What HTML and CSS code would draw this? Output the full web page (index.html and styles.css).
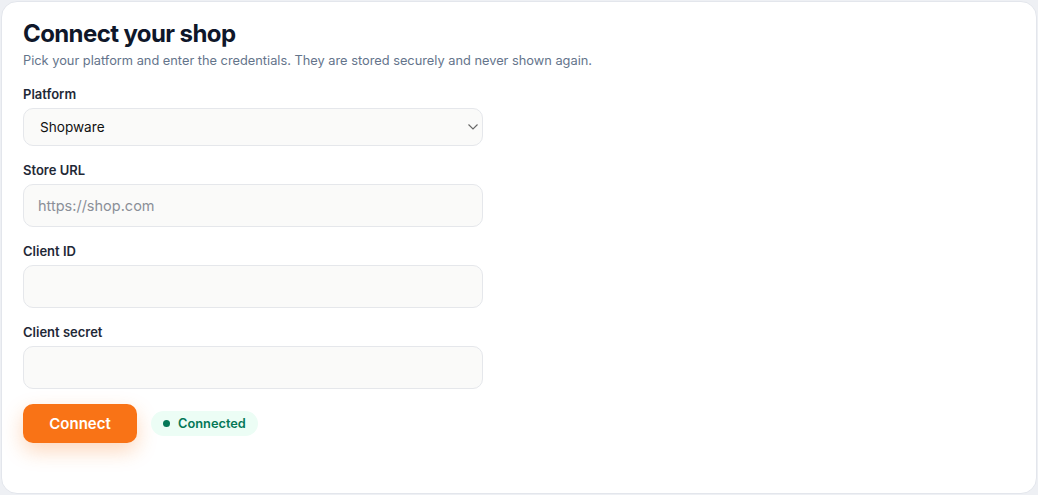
FILE: index.html
```html
<!DOCTYPE html>
<html>
<head>
<meta charset="utf-8">
<link rel="stylesheet" href="styles.css">
</head>
<body>
<div class="card">
  <h1 class="title">Connect your shop</h1>
  <p class="subtitle">Pick your platform and enter the credentials. They are stored securely and never shown again.</p>
  <form class="form">
    <div class="field">
      <label class="label">Platform</label>
      <div class="select">
        <span>Shopware</span>
        <svg class="chev" width="10" height="6" viewBox="0 0 10 6"><path d="M0.5 0.5l4.5 4.5 4.5-4.5" fill="none" stroke="#666" stroke-width="1.1"/></svg>
      </div>
    </div>
    <div class="field">
      <label class="label">Store URL</label>
      <div class="input"><span class="ph">https://shop.com</span></div>
    </div>
    <div class="field">
      <label class="label">Client ID</label>
      <div class="input"></div>
    </div>
    <div class="field field-secret">
      <label class="label">Client secret</label>
      <div class="input"></div>
    </div>
    <div class="actions">
      <button type="button" class="btn">Connect</button>
      <span class="badge"><span class="dot"></span>Connected</span>
    </div>
  </form>
</div>
</body>
</html>
```

FILE: styles.css
```css
html, body {
  margin: 0;
  padding: 0;
  background: #eef0f4;
}
body {
  padding: 1px;
  font-family: Inter, "Noto Sans", sans-serif;
  color: #111827;
}
.card {
  box-sizing: border-box;
  height: 493px;
  background: #fff;
  border: 1px solid #e3e6ec;
  border-radius: 16px;
  padding: 17px 21px;
}
.title {
  margin: 0;
  font-size: 24px;
  font-weight: 700;
  line-height: 30px;
  letter-spacing: -0.6px;
  color: #0f172a;
}
.subtitle {
  margin: 3px 0 0;
  font-size: 12.8px;
  line-height: 18px;
  color: #64748b;
}
.form {
  margin-top: 15px;
  width: 460px;
}
.field {
  margin-bottom: 15px;
}
.label {
  display: block;
  font-size: 13px;
  font-weight: 600;
  line-height: 18px;
  color: #1f2937;
  margin-bottom: 5px;
}
.select {
  box-sizing: border-box;
  height: 38px;
  display: flex;
  align-items: center;
  justify-content: space-between;
  padding: 0 4px 0 16px;
  background: #fafaf9;
  border: 1px solid #e5e7eb;
  border-radius: 10px;
  font-size: 13.6px;
  color: #111;
}
.input {
  box-sizing: border-box;
  height: 43px;
  display: flex;
  align-items: center;
  padding: 0 14px;
  background: #fafaf9;
  border: 1px solid #e5e7eb;
  border-radius: 10px;
  font-size: 14.5px;
}
.field-secret .input {
  margin-top: 1px;
}
.ph {
  color: #8a8f98;
}
.actions {
  display: flex;
  align-items: center;
  gap: 14px;
  margin-top: 5px;
}
.btn {
  width: 114px;
  height: 39px;
  border: none;
  border-radius: 10px;
  background: #f97316;
  color: #fff;
  font-family: Inter, "Noto Sans", sans-serif;
  font-size: 15px;
  font-weight: 600;
  box-shadow: 0 8px 20px rgba(249, 115, 22, 0.28);
}
.badge {
  display: inline-flex;
  align-items: center;
  gap: 8px;
  height: 25px;
  padding: 0 12px;
  background: #ecfdf5;
  border-radius: 13px;
  font-size: 12.8px;
  font-weight: 600;
  color: #047857;
}
.dot {
  width: 7px;
  height: 7px;
  border-radius: 50%;
  background: #047857;
}
```
